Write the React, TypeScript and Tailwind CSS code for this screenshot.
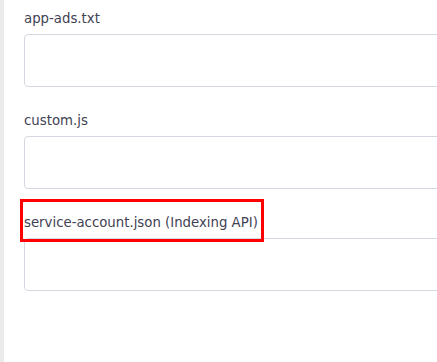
import React from 'react';

const fields = [
  { id: 'app-ads', label: 'app-ads.txt' },
  { id: 'custom-js', label: 'custom.js' },
  { id: 'service-account', label: 'service-account.json (Indexing API)', marked: true },
];

export default function App() {
  return (
    <div className="flex h-[362px] w-[437px] overflow-hidden bg-white" style={{ fontFamily: "'DejaVu Sans', sans-serif" }}>
      <div className="w-1 shrink-0 bg-[#ebebeb]" />
      <div className="flex-1 pl-5 pt-[9px]">
        {fields.map((f) => (
          <div key={f.id} className="mb-[24px]">
            <label className="relative mb-[5px] block h-5 text-[13.3px] leading-5 text-[#3f4254]">
              {f.label}
              {f.marked && (
                <span className="absolute -left-1 -top-[14px] h-[43px] w-[244px] border-[3px] border-[#f00]" />
              )}
            </label>
            <textarea className="block h-[53px] w-[480px] resize-none rounded-[4px] border border-[#d5d8e0] bg-white" />
          </div>
        ))}
      </div>
    </div>
  );
}
